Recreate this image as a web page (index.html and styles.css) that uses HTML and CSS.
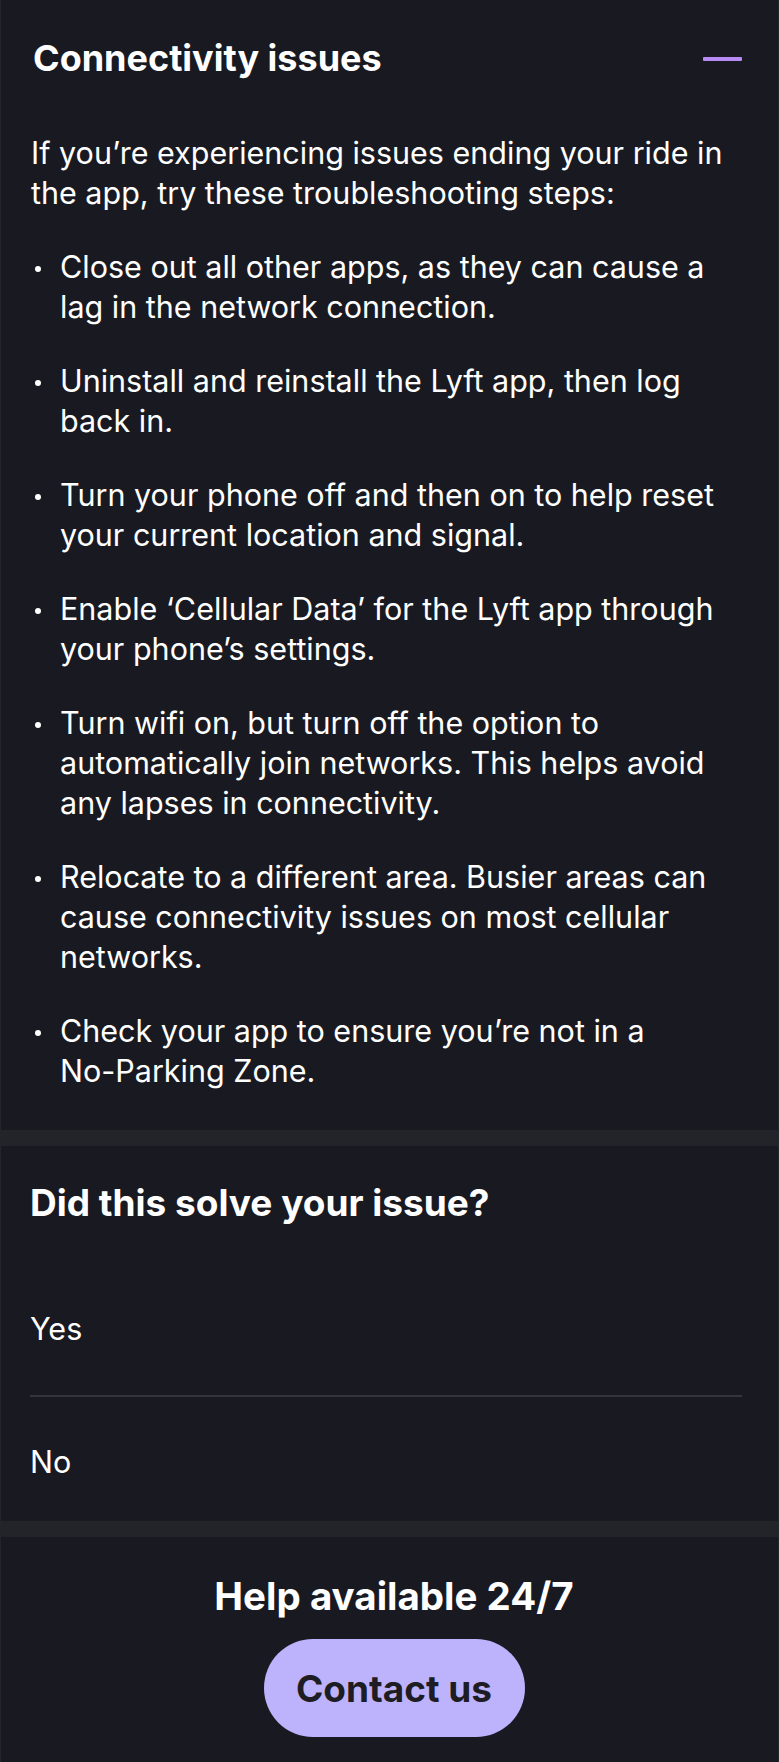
FILE: index.html
```html
<!DOCTYPE html>
<html lang="en">
<head>
<meta charset="utf-8">
<title>Connectivity issues</title>
<link rel="stylesheet" href="styles.css">
</head>
<body>
<main class="page">
  <section class="article">
    <header class="article-head">
      <h1 class="article-title">Connectivity issues</h1>
      <span class="collapse-icon" aria-hidden="true"></span>
    </header>
    <p class="intro">If you’re experiencing issues ending your ride in the app, try these troubleshooting steps:</p>
    <ul class="steps">
      <li>Close out all other apps, as they can cause a lag in the network connection.</li>
      <li>Uninstall and reinstall the Lyft app, then log back in.</li>
      <li>Turn your phone off and then on to help reset your current location and signal.</li>
      <li>Enable ‘Cellular Data’ for the Lyft app through your phone’s settings.</li>
      <li>Turn wifi on, but turn off the option to automatically join networks. This helps avoid any lapses in connectivity.</li>
      <li>Relocate to a different area. Busier areas can cause connectivity issues on most cellular networks.</li>
      <li>Check your app to ensure you’re not in a <span class="nowrap">No-Parking</span> Zone.</li>
    </ul>
  </section>
  <div class="band"></div>
  <section class="feedback">
    <h2 class="feedback-title">Did this solve your issue?</h2>
    <div class="option">Yes</div>
    <div class="option">No</div>
  </section>
  <div class="band"></div>
  <section class="help">
    <h2 class="help-title">Help available 24/7</h2>
    <button class="contact-btn" type="button">Contact us</button>
  </section>
</main>
</body>
</html>
```
FILE: styles.css
```css
* { box-sizing: border-box; }
html, body {
  margin: 0;
  padding: 0;
  background: #191a21;
}
body {
  font-family: Inter, "Liberation Sans", sans-serif;
  color: #ffffff;
}
.page {
  width: 779px;
  min-height: 1762px;
  background: #191a21;
  border-left: 1px solid #24252b;
  border-right: 1px solid #24252b;
  display: flex;
  flex-direction: column;
}
.nowrap {
  white-space: nowrap;
}
.article {
  padding: 38px 36px 39px 30px;
}
.article-head {
  display: flex;
  align-items: center;
  justify-content: space-between;
  height: 40px;
}
.article-title {
  margin: 0;
  font-size: 36px;
  line-height: 40px;
  font-weight: 700;
  padding-left: 2px;
}
.collapse-icon {
  display: block;
  width: 39px;
  height: 4px;
  border-radius: 1px;
  background: #b88af4;
  margin-top: 2px;
}
.intro {
  margin: 55px 0 34px 0;
  font-size: 30.5px;
  line-height: 40px;
}
.steps {
  list-style: none;
  margin: 0;
  padding: 0;
  display: flex;
  flex-direction: column;
  gap: 34px;
}
.steps li {
  position: relative;
  padding-left: 29px;
  font-size: 30.5px;
  line-height: 40px;
}
.steps li::before {
  content: "";
  position: absolute;
  left: 4px;
  top: 19px;
  width: 6px;
  height: 6px;
  border-radius: 50%;
  background: #ffffff;
}
.band {
  height: 16px;
  background: #232429;
  flex: none;
}
.feedback {
  padding: 37px 36px 0 29px;
}
.feedback-title {
  margin: 0;
  font-size: 37px;
  line-height: 40px;
  font-weight: 700;
}
.option {
  font-size: 30.5px;
  height: 134px;
  display: flex;
  align-items: center;
}
.option:first-of-type {
  margin-top: 38px;
}
.option + .option {
  border-top: 2px solid #34353a;
  height: 126px;
  padding-top: 4px;
}
.help {
  display: flex;
  flex-direction: column;
  align-items: center;
  padding-top: 39px;
  padding-left: 9px;
  flex: 1;
}
.help-title {
  margin: 0;
  font-size: 38.5px;
  line-height: 40px;
  font-weight: 700;
}
.contact-btn {
  margin-top: 23px;
  width: 261px;
  height: 98px;
  border: none;
  border-radius: 49px;
  background: #bdb3fd;
  color: #1d1d23;
  font-family: Inter, "Liberation Sans", sans-serif;
  font-size: 37px;
  font-weight: 700;
  padding: 0;
  cursor: pointer;
}
```
